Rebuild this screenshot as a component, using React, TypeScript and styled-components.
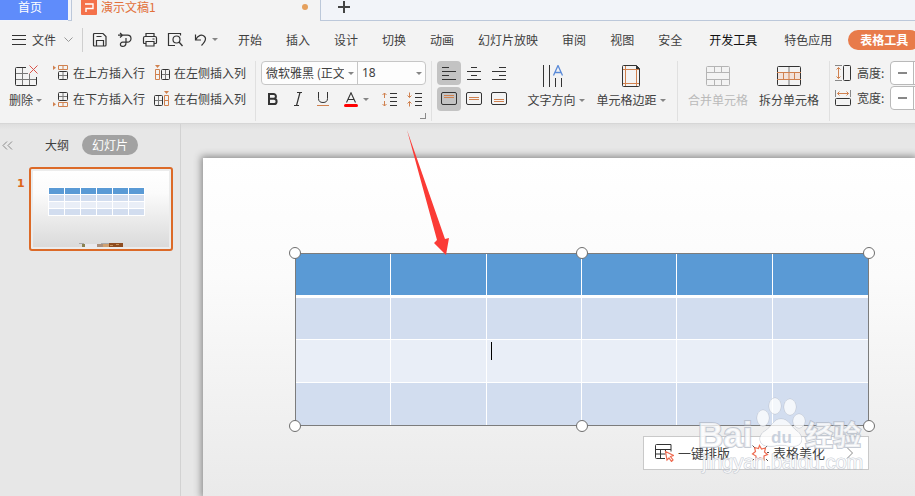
import React from "react";
import styled, { createGlobalStyle, css } from "styled-components";

const sans = `"Noto Sans CJK SC", "Noto Sans", sans-serif`;
const ink = "#404040";
const orange = "#d0814f";

const Global = createGlobalStyle`
  *, *::before, *::after { box-sizing: border-box; }
  html, body, #root { height: 100%; margin: 0; }
  body { overflow: hidden; font: 12px/18px ${sans}; color: ${ink}; background: #e7e7e7; }
  button, select, input { font: inherit; color: inherit; margin: 0; padding: 0; border: 0; background: none; }
  svg { display: block; flex: none; }
`;

const Window = styled.div`
  display: flex;
  flex-direction: column;
  height: 100%;
  overflow: hidden;
`;

/* ---------- document tabs ---------- */
const TabBar = styled.nav`
  display: flex;
  flex: none;
  height: 21px;
  background: #f2f4f9;
`;
const HomeTab = styled.button`
  width: 68px;
  height: 20px;
  padding: 0 8px 6px 0;
  line-height: 14px;
  color: #fff;
  background: #5f8cfb;
`;
const TabGap = styled.span`
  width: 4px;
  border-right: 1px solid #bcc8da;
  border-bottom: 1px solid #bcc8da;
`;
const DocTab = styled.button`
  display: flex;
  align-items: center;
  width: 249px;
  height: 21px;
  padding: 0 12px 7px 9px;
  gap: 4px;
  line-height: 14px;
  color: #e2703a;
  background: #f3f3f3;
  border-right: 1px solid #bcc8da;
`;
const Unsaved = styled.i`
  width: 6px;
  height: 6px;
  margin-left: auto;
  border-radius: 50%;
  background: #e5a05c;
`;
const TabRest = styled.div`
  display: flex;
  flex: 1;
  padding: 0 16px;
  border-bottom: 1px solid #bcc8da;
`;
const NewTab = styled.button`
  height: 14px;
`;

/* ---------- menu bar ---------- */
const MenuBar = styled.div`
  display: flex;
  flex: none;
  align-items: center;
  height: 39px;
  padding: 0 0 2px 12px;
  background: #f3f3f3;
  white-space: nowrap;
`;
const FileButton = styled.button`
  display: flex;
  flex: none;
  align-items: center;
  gap: 6px;
  padding-right: 8px;
`;
const MenuRule = styled.span`
  flex: none;
  width: 1px;
  height: 24px;
  background: #cfcfcf;
`;
const QuickTools = styled.div`
  display: flex;
  flex: none;
  gap: 9px;
  padding-left: 9px;
  width: 155px;
`;
const QuickButton = styled.button`
  display: flex;
  align-items: center;
  gap: 4px;
`;
const Menus = styled.div`
  display: flex;
  flex: none;
  align-items: center;
  gap: 24px;
`;
const MenuItem = styled.button<{ $strong?: boolean; $spaced?: boolean }>`
  flex: none;
  color: ${(p) => (p.$strong ? "#111" : ink)};
  margin-left: ${(p) => (p.$spaced ? "3px" : "0")};
`;
const ActiveMenu = styled.button`
  flex: none;
  height: 20px;
  margin-left: -8px;
  padding: 0 12px;
  border-radius: 10px;
  font-weight: 700;
  color: #fff;
  background: #e87b4a;
`;

/* ---------- ribbon ---------- */
const Ribbon = styled.div`
  display: flex;
  flex: none;
  height: 64px;
  padding-top: 1px;
  background: #f3f3f3;
  border-bottom: 1px solid #d6d6d6;
  white-space: nowrap;
`;
const Group = styled.section<{ $w: number; $pad: number; $gap?: number; $last?: boolean }>`
  position: relative;
  display: flex;
  flex: none;
  align-items: flex-start;
  width: ${(p) => p.$w}px;
  height: 60px;
  gap: ${(p) => p.$gap ?? 0}px;
  padding-left: ${(p) => p.$pad}px;
  border-right: ${(p) => (p.$last ? "0" : "1px solid #e0e0e0")};
`;
const BigButton = styled.button<{ $w: number }>`
  display: flex;
  flex-direction: column;
  align-items: center;
  gap: 2px;
  width: ${(p) => p.$w}px;
  padding-top: 2px;
  &:disabled { color: #bababa; }
`;
const BigIcon = styled.span<{ $shift?: boolean }>`
  display: flex;
  align-items: center;
  height: 26px;
  padding-right: ${(p) => (p.$shift ? "6px" : "0")};
`;
const Caption = styled.span`
  display: flex;
  align-items: center;
  gap: 3px;
`;
const Stack = styled.div<{ $gap: number }>`
  display: flex;
  flex-direction: column;
  gap: ${(p) => p.$gap}px;
`;
const RowButton = styled.button`
  display: flex;
  align-items: center;
  gap: 4px;
  height: 24px;
`;
const Combo = styled.div`
  display: flex;
  width: 165px;
  height: 24px;
  border: 1px solid #c6c6c6;
  border-radius: 4px;
  background: #fdfdfd;
`;
const SelectBox = styled.label<{ $w: number }>`
  display: flex;
  align-items: center;
  gap: 4px;
  width: ${(p) => p.$w}px;
  padding: 0 3px 0 4px;
  & + & { border-left: 1px solid #c6c6c6; }
`;
const Select = styled.select<{ $latin?: boolean }>`
  flex: 1;
  min-width: 0;
  height: 22px;
  appearance: none;
  outline: 0;
  overflow: hidden;
  text-overflow: clip;
  ${(p) => p.$latin && css`font-family: "Noto Sans", sans-serif;`}
`;
const FormatRow = styled.div`
  display: grid;
  grid-template-columns: 24px 26px 24px 42px 24px 26px;
  align-items: center;
  justify-items: center;
  height: 24px;
`;
const FormatButton = styled.button`
  display: flex;
  align-items: center;
  gap: 5px;
`;
const Launcher = styled.button`
  position: absolute;
  right: 5px;
  bottom: 2px;
  width: 6px;
  height: 6px;
  border-right: 1px solid #8a8a8a;
  border-bottom: 1px solid #8a8a8a;
`;
const AlignGrid = styled.div`
  display: grid;
  grid-template-columns: repeat(3, 24px);
  gap: 2px 1px;
  margin-right: 14px;
`;
const AlignButton = styled.button<{ $on?: boolean }>`
  display: flex;
  align-items: center;
  justify-content: center;
  height: 24px;
  border-radius: 4px;
  background: ${(p) => (p.$on ? "#c3c3c3" : "transparent")};
`;
const SizeRow = styled.div`
  display: flex;
  align-items: center;
  height: 24px;
  gap: 6px;
`;
const Spinner = styled.span`
  display: flex;
  height: 24px;
  width: 96px;
  border: 1px solid #b9b9b9;
  border-radius: 4px;
  background: #fff;
`;
const SpinButton = styled.button`
  display: flex;
  align-items: center;
  justify-content: center;
  width: 22px;
`;
const SpinInput = styled.input`
  width: 50px;
  border-left: 1px solid #b9b9b9;
  border-right: 1px solid #b9b9b9;
`;

/* ---------- workspace ---------- */
const Workspace = styled.div`
  display: flex;
  flex: 1;
  min-height: 0;
  background: linear-gradient(#dedede, #e7e7e7 6px);
`;
const SidePanel = styled.aside`
  flex: none;
  width: 181px;
  border-right: 1px solid #d2d2d2;
`;
const PanelHead = styled.div`
  display: flex;
  align-items: center;
  height: 42px;
  padding-left: 2px;
`;
const PanelTab = styled.button<{ $on?: boolean }>`
  height: 20px;
  padding: 0 ${(p) => (p.$on ? 10 : 13)}px;
  border-radius: 10px;
  color: ${(p) => (p.$on ? "#fff" : ink)};
  background: ${(p) => (p.$on ? "#a2a2a2" : "transparent")};
`;
const Collapse = styled.button`
  width: 30px;
`;
const ThumbRow = styled.div`
  display: flex;
  padding: 1px 0 0 17px;
`;
const ThumbNumber = styled.span`
  width: 12px;
  padding-top: 8px;
  font: 700 11px/18px "DejaVu Sans", sans-serif;
  color: #dd6418;
`;
const Thumb = styled.button`
  display: flex;
  flex-direction: column;
  justify-content: space-between;
  align-items: center;
  width: 144px;
  height: 84px;
  padding: 18px 0 0 0;
  border: 2px solid #dc6a28;
  border-radius: 3px;
  background: linear-gradient(#fff, #fbfbfb 30%, #d9d9d9);
  box-shadow: inset 0 0 0 2px #ececec;
`;
const ThumbTable = styled.span`
  display: grid;
  grid-template-columns: repeat(6, 15px);
  grid-auto-rows: 6px;
  gap: 1px;
  padding: 1px;
  margin-right: 10px;
  background: #fff;
`;
const ThumbCell = styled.i<{ $tone: string }>`
  background: ${(p) => p.$tone};
`;
const Stage = styled.main`
  flex: 1;
  min-width: 0;
  padding: 34px 0 0 22px;
  overflow: hidden;
`;
const Slide = styled.div`
  position: relative;
  height: 100%;
  padding: 95px 46px 0 92px;
  background: linear-gradient(#fff, #fbfbfb 35%, #eaeaea);
  box-shadow: 0 0 7px 2px #8e8e8e;
`;
const TableFrame = styled.div`
  position: relative;
  border: 1px solid #7c7c7c;
`;
const SlideTable = styled.table`
  width: 100%;
  table-layout: fixed;
  border-spacing: 0;
`;
const Cell = styled.td<{ $tone: string; $h: number; $last?: boolean }>`
  height: ${(p) => p.$h}px;
  padding: 0 4px;
  vertical-align: top;
  background: ${(p) => p.$tone};
  border-right: 1px solid #fff;
  border-bottom: ${(p) => (p.$last ? "0" : "1px solid #fff")};
  &:last-child { border-right: 0; }
`;
const HeadCell = styled.th`
  height: 44px;
  padding: 0;
  background: #5a9ad5;
  border-right: 1px solid #fff;
  border-bottom: 3px solid #fff;
  &:last-child { border-right: 0; }
`;
const TextCursor = styled.i`
  display: block;
  width: 1px;
  height: 18px;
  margin-top: 2px;
  background: #000;
`;
const HandleLayer = styled.div`
  position: absolute;
  inset: -1px;
  pointer-events: none;
`;
const Handle = styled.i<{ $x: number; $y: number }>`
  position: absolute;
  left: ${(p) => p.$x}%;
  top: ${(p) => p.$y}%;
  width: 12px;
  height: 12px;
  margin: -6px 0 0 -6px;
  border: 1px solid #6e6e6e;
  border-radius: 50%;
  background: #fff;
`;
const FloatBar = styled.div`
  position: absolute;
  right: -1px;
  top: calc(100% + 11px);
  display: flex;
  align-items: center;
  width: 226px;
  height: 34px;
  padding: 0 12px 0 11px;
  border: 1px solid #c9c9c9;
  background: #fff;
  font-size: 13px;
`;
const FloatButton = styled.button`
  display: flex;
  align-items: center;
  gap: 4px;
  margin-right: 21px;
  white-space: nowrap;
`;
const Watermark = styled.svg`
  position: absolute;
  right: 2px;
  bottom: -52px;
  pointer-events: none;
`;
const Arrow = styled.svg`
  position: absolute;
  left: 109px;
  top: -124px;
  pointer-events: none;
`;

/* ---------- icons ---------- */
type IconProps = { w: number; h: number; children: React.ReactNode; color?: string };
const Icon = ({ w, h, children, color = "#333" }: IconProps) => (
  <svg width={w} height={h} viewBox={`0 0 ${w} ${h}`} fill="none" stroke={color} aria-hidden="true">
    {children}
  </svg>
);
const Caret = () => (
  <Icon w={6} h={3}>
    <path d="M0 0h6L3 3z" fill="#858585" stroke="none" />
  </Icon>
);

const InsertIcon = ({ kind }: { kind: "above" | "below" | "left" | "right" }) => {
  const rows = kind === "above" || kind === "below";
  const turn = kind === "below" ? "matrix(1 0 0 -1 0 16)" : kind === "right" ? "matrix(-1 0 0 1 16 0)" : undefined;
  return (
    <Icon w={16} h={16}>
      {rows ? (
        <g transform={turn}>
          <path d="M0 .5v4.500l3-2.200z" fill={orange} stroke="none" />
          <path d="M5.500 .5h9v4h-9zM10 .5v4" stroke={orange} />
          <path d="M10 6.500v8M5.500 10.500h9" stroke="#777" />
          <rect x="5.500" y="6.500" width="9" height="8" rx="1" />
        </g>
      ) : (
        <g transform={turn}>
          <path d="M1 0h5L3.500 3z" fill={orange} stroke="none" />
          <path d="M1.500 4.500h4v10h-4zM1.500 9.500h4" stroke={orange} />
          <path d="M11.500 4.500v10M7.500 9.500h8" stroke="#777" />
          <rect x="7.500" y="4.500" width="8" height="10" rx="1" />
        </g>
      )}
    </Icon>
  );
};

const SpacingIcon = ({ inward }: { inward?: boolean }) => (
  <Icon w={15} h={15}>
    <path d="M8 1.500h7M8 5.500h7M8 9.500h7M8 13.500h7" />
    {inward ? (
      <path d="M2.500 .5v5M.5 3.500l2 2 2-2M2.500 14.500v-5M.5 11.500l2-2 2 2" stroke={orange} />
    ) : (
      <path d="M2.500 6V1M.5 3l2-2 2 2M2.500 9v5M.5 12l2 2 2-2" stroke={orange} />
    )}
  </Icon>
);

const linePaths = {
  left: "M0 .5h7M0 4.500h14M0 8.500h7M0 12.500h14",
  center: "M4 .5h6M0 4.500h14M4 8.500h6M0 12.500h14",
  right: "M7 .5h7M0 4.500h14M7 8.500h7M0 12.500h14",
};
const AlignIcon = ({ side }: { side: keyof typeof linePaths }) => (
  <Icon w={14} h={13}>
    <path d={linePaths[side]} />
  </Icon>
);
const VAlignIcon = ({ y }: { y: number }) => (
  <Icon w={16} h={14}>
    <rect x=".5" y=".5" width="15" height="12" rx="1.500" />
    <path d={`M3 ${y}.5h10M3 ${y + 2}.5h10`} stroke={orange} />
  </Icon>
);

const menus = ["开始", "插入", "设计", "切换", "动画", "幻灯片放映", "审阅", "视图", "安全"];
const rows = [
  { tone: "#d2ddef", height: 42 },
  { tone: "#e9eef7", height: 43 },
  { tone: "#d2ddef", height: 42 },
];
const cols = [0, 1, 2, 3, 4, 5];
const handles = [
  [0, 0], [50, 0], [100, 0],
  [0, 100], [50, 100], [100, 100],
];

export default function App() {
  return (
    <Window>
      <Global />
      <TabBar>
        <HomeTab>首页</HomeTab>
        <TabGap />
        <DocTab>
          <Icon w={16} h={16}>
            <rect width="16" height="16" rx="1" fill="#f4714a" stroke="none" />
            <path d="M4 5h8v4.500H5V13" stroke="#fff" strokeWidth="1.400" />
          </Icon>
          演示文稿1
          <Unsaved />
        </DocTab>
        <TabRest>
          <NewTab aria-label="新建">
            <Icon w={14} h={12} color="#444">
              <path d="M1 6h12M7 0v12" strokeWidth="2" />
            </Icon>
          </NewTab>
        </TabRest>
      </TabBar>

      <MenuBar>
        <FileButton>
          <Icon w={14} h={10}>
            <path d="M0 .5h14M0 4.500h14M0 9.500h14" />
          </Icon>
          文件
          <Icon w={12} h={6} color="#999">
            <path d="M2.500 .5l4 4 4-4" />
          </Icon>
        </FileButton>
        <MenuRule />
        <QuickTools>
          <QuickButton aria-label="保存">
            <Icon w={16} h={16}>
              <path d="M1.500 2.500q0-1 1-1h8.500l3 3v8.500q0 1-1 1h-10.500q-1 0-1-1zM4.500 14V8.500h7V14M4.500 4.500h5" strokeWidth="1.200" />
            </Icon>
          </QuickButton>
          <QuickButton aria-label="输出为PDF">
            <Icon w={16} h={16}>
              <path d="M3 1l2.500 2.200L3 5.500M1 3.200h9.500a3.500 3.500 0 0 1 0 7H5.500a2 2 0 0 0 0 4.200c2.500 0 3.500-2 3.500-4V6" strokeWidth="1.200" />
            </Icon>
          </QuickButton>
          <QuickButton aria-label="打印">
            <Icon w={16} h={16}>
              <path d="M4 4.500V1.500h8v3M4 11.500H2.500q-1 0-1-1V6q0-1.500 1.500-1.500h10q1.500 0 1.500 1.500v4.500q0 1-1 1H12M4 9.500h8v4.500H4zM10.500 7h2" strokeWidth="1.200" />
            </Icon>
          </QuickButton>
          <QuickButton aria-label="打印预览">
            <Icon w={16} h={16}>
              <path d="M8 13.500H1.500v-12h12v2" strokeWidth="1.200" />
              <circle cx="9.500" cy="7.500" r="3.500" strokeWidth="1.200" />
              <path d="M12 10l3.500 4" strokeWidth="1.400" />
            </Icon>
          </QuickButton>
          <QuickButton aria-label="撤销">
            <Icon w={16} h={16}>
              <path d="M3.500 2.500v5.500h5.500M3.500 8C6 3 10 2 12.500 4.500s0 6-3 9" strokeWidth="1.200" />
            </Icon>
            <Caret />
          </QuickButton>
        </QuickTools>
        <Menus>
          {menus.map((m) => (
            <MenuItem key={m}>{m}</MenuItem>
          ))}
          <MenuItem $strong $spaced>开发工具</MenuItem>
          <MenuItem $spaced>特色应用</MenuItem>
          <ActiveMenu>表格工具</ActiveMenu>
        </Menus>
      </MenuBar>

      <Ribbon>
        <Group $w={256} $pad={7} $gap={9}>
          <BigButton $w={37}>
            <BigIcon>
              <Icon w={24} h={22}>
                <path d="M8.500 3v17M15.500 9v11M2 8.500h12M2 14.500h20" stroke="#777" />
                <path d="M12 2.500H2.500a1 1 0 0 0-1 1v16a1 1 0 0 0 1 1h19a1 1 0 0 0 1-1V12" />
                <path d="M15.500 .5l8 8M23.500 .5l-8 8" stroke="#d9534a" />
              </Icon>
            </BigIcon>
            <Caption>删除<Caret /></Caption>
          </BigButton>
          <Stack $gap={2}>
            <RowButton><InsertIcon kind="above" />在上方插入行</RowButton>
            <RowButton><InsertIcon kind="below" />在下方插入行</RowButton>
          </Stack>
          <Stack $gap={2}>
            <RowButton><InsertIcon kind="left" />在左侧插入列</RowButton>
            <RowButton><InsertIcon kind="right" />在右侧插入列</RowButton>
          </Stack>
        </Group>

        <Group $w={176} $pad={5}>
          <Stack $gap={2}>
            <Combo>
              <SelectBox $w={95}>
                <Select aria-label="字体" defaultValue="a">
                  <option value="a">微软雅黑 (正文)</option>
                </Select>
                <Caret />
              </SelectBox>
              <SelectBox $w={68}>
                <Select $latin aria-label="字号" defaultValue="18">
                  <option>18</option>
                </Select>
                <Caret />
              </SelectBox>
            </Combo>
            <FormatRow>
              <FormatButton aria-label="加粗">
                <Icon w={12} h={14}>
                  <path d="M2 2h4.500a2.400 2.400 0 0 1 0 4.800H2zM2 6.800h5a2.600 2.600 0 0 1 0 5.200H2z" strokeWidth="2" />
                </Icon>
              </FormatButton>
              <FormatButton aria-label="倾斜">
                <Icon w={10} h={14}>
                  <path d="M4 .5h5M1 13.500h5M7 .5L3.500 13.500" strokeWidth="1.200" />
                </Icon>
              </FormatButton>
              <FormatButton aria-label="下划线">
                <Icon w={12} h={15}>
                  <path d="M1.500 0v6.500q0 4 4.500 4t4.500-4V0" />
                  <path d="M0 13.500h12" stroke={orange} />
                </Icon>
              </FormatButton>
              <FormatButton aria-label="字体颜色">
                <Icon w={14} h={15}>
                  <path d="M2.500 10.500L7 .8l4.500 9.700M4 7.500h6" strokeWidth="1.100" />
                  <rect y="12" width="14" height="3" rx="1.500" fill="#f00" stroke="none" />
                </Icon>
                <Caret />
              </FormatButton>
              <FormatButton aria-label="增大行距"><SpacingIcon /></FormatButton>
              <FormatButton aria-label="减小行距"><SpacingIcon inward /></FormatButton>
            </FormatRow>
          </Stack>
          <Launcher aria-label="字体设置" />
        </Group>

        <Group $w={246} $pad={5}>
          <AlignGrid>
            <AlignButton $on aria-label="左对齐"><AlignIcon side="left" /></AlignButton>
            <AlignButton aria-label="居中"><AlignIcon side="center" /></AlignButton>
            <AlignButton aria-label="右对齐"><AlignIcon side="right" /></AlignButton>
            <AlignButton $on aria-label="顶端对齐"><VAlignIcon y={3} /></AlignButton>
            <AlignButton aria-label="垂直居中"><VAlignIcon y={5} /></AlignButton>
            <AlignButton aria-label="底端对齐"><VAlignIcon y={7} /></AlignButton>
          </AlignGrid>
          <BigButton $w={62}>
            <BigIcon $shift>
              <Icon w={22} h={22}>
                <path d="M1.500 0v22M7.500 0v22M13.500 13v9M19.500 13v9" />
                <path d="M11.500 10.500L16 .5l4.500 10M13 7.500h6" stroke="#5a8ad8" strokeWidth="1.300" />
              </Icon>
            </BigIcon>
            <Caption>文字方向<Caret /></Caption>
          </BigButton>
          <BigButton $w={88}>
            <BigIcon>
              <Icon w={18} h={22}>
                <path d="M3.500 0v22M14.500 3v19M0 4.500h17M0 18.500h17" stroke={orange} />
                <path d="M1.500 .5h13l3 3v17a1 1 0 0 1-1 1h-15a1 1 0 0 1-1-1v-19a1 1 0 0 1 1-1z" />
                <path d="M14 0l4 4h-4z" fill="#333" stroke="none" />
              </Icon>
            </BigIcon>
            <Caption>单元格边距<Caret /></Caption>
          </BigButton>
        </Group>

        <Group $w={152} $pad={5}>
          <BigButton $w={70} disabled>
            <BigIcon>
              <Icon w={24} h={20} color="#b4b4b4">
                <rect x=".5" y=".5" width="23" height="19" rx="1" />
                <path d="M1 6.500h22M1 13.500h22M8.500 1v5M15.500 1v5M8.500 14v5M15.500 14v5" />
              </Icon>
            </BigIcon>
            <Caption>合并单元格</Caption>
          </BigButton>
          <BigButton $w={72}>
            <BigIcon>
              <Icon w={24} h={20}>
                <path d="M.5 6.500h23v7H.5z" fill="#f3e2da" stroke="none" />
                <path d="M12 1v5M12 14v5" stroke="#777" />
                <rect x=".5" y=".5" width="23" height="19" rx="1" />
                <path d="M0 6.500h24M0 13.500h24M6.500 7v6M17.500 7v6M12 7v6" stroke={orange} />
              </Icon>
            </BigIcon>
            <Caption>拆分单元格</Caption>
          </BigButton>
        </Group>

        <Group $w={180} $pad={5} $last>
          <Stack $gap={1}>
            <SizeRow>
              <Icon w={16} h={18}>
                <rect x="8.500" y="1.500" width="7" height="15" rx="1" />
                <path d="M0 1.500h7M0 16.500h7" stroke="#888" />
                <path d="M3.500 3.500v11M1.500 5.500l2-2 2 2M1.500 12.500l2 2 2-2" stroke={orange} />
              </Icon>
              <label htmlFor="cell-height">高度:</label>
              <Spinner>
                <SpinButton aria-label="减小高度">
                  <Icon w={9} h={2}><path d="M0 1h9" stroke="#888" strokeWidth="2" /></Icon>
                </SpinButton>
                <SpinInput id="cell-height" />
              </Spinner>
            </SizeRow>
            <SizeRow>
              <Icon w={16} h={18}>
                <rect x=".5" y="9.500" width="15" height="7" rx="1" />
                <path d="M.5 1v7M15.500 1v7" stroke="#888" />
                <path d="M2.500 4.500h11M4.500 2.500l-2 2 2 2M11.500 2.500l2 2-2 2" stroke={orange} />
              </Icon>
              <label htmlFor="cell-width">宽度:</label>
              <Spinner>
                <SpinButton aria-label="减小宽度">
                  <Icon w={9} h={2}><path d="M0 1h9" stroke="#888" strokeWidth="2" /></Icon>
                </SpinButton>
                <SpinInput id="cell-width" />
              </Spinner>
            </SizeRow>
          </Stack>
        </Group>
      </Ribbon>

      <Workspace>
        <SidePanel>
          <PanelHead>
            <Collapse aria-label="收起">
              <Icon w={11} h={9} color="#8a8a8a">
                <path d="M5 .5l-4 4 4 4M10 .5l-4 4 4 4" />
              </Icon>
            </Collapse>
            <PanelTab>大纲</PanelTab>
            <PanelTab $on>幻灯片</PanelTab>
          </PanelHead>
          <ThumbRow>
            <ThumbNumber>1</ThumbNumber>
            <Thumb aria-label="幻灯片 1">
              <ThumbTable>
                {["#5a9ad5", ...rows.map((r) => r.tone)].map((tone, r) =>
                  cols.map((c) => <ThumbCell key={`${r}-${c}`} $tone={tone} />)
                )}
              </ThumbTable>
              <Icon w={44} h={6}>
                <path d="M0 0h44v4H0z" fill="#dcdcdc" stroke="none" />
                <path d="M0 .5h5M22 .5h8" stroke="#aaa" />
                <path d="M3 1h3v3H3z" fill="#8a8250" stroke="none" />
                <path d="M6 1h12v3H6z" fill="#e9e9ee" stroke="none" />
                <path d="M18 1h6v3h-6z" fill="#ab8f7c" stroke="none" />
                <path d="M24 1h6v3h-6z" fill="#d0a070" stroke="none" />
                <path d="M30 0h14v4H30z" fill="#8f4c20" stroke="none" />
                <path d="M31 2.500h3M37 1.500h3" stroke="#c9945c" />
              </Icon>
            </Thumb>
          </ThumbRow>
        </SidePanel>

        <Stage>
          <Slide>
            <TableFrame>
              <SlideTable>
                <thead>
                  <tr>{cols.map((c) => <HeadCell key={c} scope="col" />)}</tr>
                </thead>
                <tbody>
                  {rows.map(({ tone, height }, r) => (
                    <tr key={r}>
                      {cols.map((c) => (
                        <Cell key={c} $tone={tone} $h={height} $last={r === rows.length - 1}>
                          {r === 1 && c === 2 && <TextCursor />}
                        </Cell>
                      ))}
                    </tr>
                  ))}
                </tbody>
              </SlideTable>
              <HandleLayer>
                {handles.map(([x, y]) => (
                  <Handle key={`${x}-${y}`} $x={x} $y={y} />
                ))}
              </HandleLayer>
              <FloatBar>
                <FloatButton>
                  <Icon w={19} h={18}>
                    <path d="M10 14.500H1.500a1 1 0 0 1-1-1v-12a1 1 0 0 1 1-1h14.500v7M.5 5.500H16M5.500 5.500v9M.5 10h10M10.500 5.500V8" />
                    <path d="M10.500 7.500l8 4-3 1 2.500 3.500-1.500 1.500-2.500-3.500-2 2z" stroke="#ee6c52" strokeWidth="1.200" fill="#fff" />
                  </Icon>
                  一键排版
                </FloatButton>
                <FloatButton>
                  <Icon w={18} h={18}>
                    <path d="M8.500 1.500l2 3.500 4-1-1 4 3 2.500-3.500 1.500v4l-4-2-4 2v-4l-3.500-2 3-2.500-1-4 4 1z" stroke="#ee6c52" strokeWidth="1.200" />
                    <path d="M1.500 1.500l2 2M16.500 1.500l-2 2M16 8.500h2M1 17l2-2M17 17l-2-2" stroke="#555" />
                  </Icon>
                  表格美化
                </FloatButton>
                <Icon w={7} h={12} color="#8a8a8a">
                  <path d="M1 .5L6.500 6l-5.500 5.500" />
                </Icon>
              </FloatBar>
              <Watermark width="172" height="84" viewBox="0 0 172 84" fill="#fff" fillOpacity=".75" stroke="#b3bac6" strokeOpacity=".75" strokeWidth="2" paintOrder="stroke">
                <ellipse cx="69" cy="25" rx="6" ry="8" strokeWidth="1" />
                <ellipse cx="81" cy="13" rx="6" ry="8" strokeWidth="1" />
                <ellipse cx="96" cy="14" rx="6" ry="8" strokeWidth="1" />
                <ellipse cx="105" cy="28" rx="6" ry="7" strokeWidth="1" />
                <path d="M87 26c8 0 10 8 16 12s7 14-2 15c-6 1-9-1-14-1s-8 2-14 1c-9-1-9-11-2-15s8-12 16-12z" strokeWidth="1" />
                <text x="4" y="54" fontFamily="Liberation Sans, sans-serif" fontWeight="700" fontSize="35">Bai</text>
                <text x="77" y="50" fontFamily="Liberation Sans, sans-serif" fontWeight="700" fontSize="17" fill="#b9c3d3" stroke="none">du</text>
                <text x="111" y="53" fontFamily="Noto Sans CJK SC, sans-serif" fontWeight="700" fontSize="28">经验</text>
                <text x="8" y="76" fontFamily="Liberation Sans, sans-serif" fontSize="20" strokeWidth="1">jingyan.baidu.com</text>
              </Watermark>
              <Arrow width="50" height="130" viewBox="0 0 50 130">
                <path d="M2 0L40 109l4-1-3 17-12-12 3-3z" fill="#fb3b36" />
              </Arrow>
            </TableFrame>
          </Slide>
        </Stage>
      </Workspace>
    </Window>
  );
}
